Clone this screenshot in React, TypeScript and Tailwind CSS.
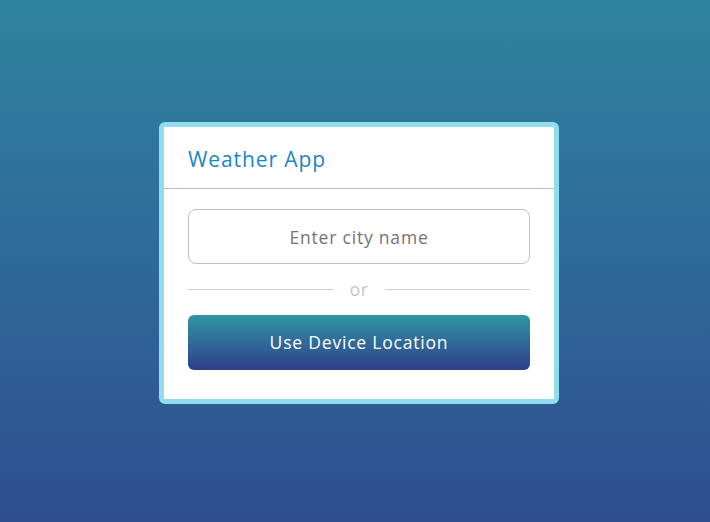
import React from "react";

export default function App() {
  return (
    <div
      className="w-full h-[522px] flex items-center justify-center pl-[8px] pt-[4px] bg-gradient-to-b from-[#2e84a0] to-[#2e4e8f]"
      style={{ fontFamily: "'Open Sans', 'Noto Sans', sans-serif" }}
    >
      <div className="w-[400px] bg-white border-[5px] border-[#92dcef] rounded-[6px] flex flex-col">
        <div className="h-[62px] border-b border-[#bdbdbd] flex items-center px-[24px]">
          <h1 className="text-[21px] text-[#1b87c1] leading-none tracking-[0.9px] pt-[3px]">Weather App</h1>
        </div>
        <div className="flex flex-col px-[24px] pt-[20px] pb-[29px]">
          <input
            className="h-[55px] w-full border border-[#c2c2c2] rounded-[8px] text-center text-[17.5px] tracking-[0.8px] text-[#555] placeholder:text-[#747474] outline-none"
            placeholder="Enter city name"
          />
          <div className="flex items-center h-[51px] gap-[16px]">
            <div className="flex-1 h-px bg-[#cfcfcf]"></div>
            <span className="text-[18px] text-[#c8c8c8] leading-none tracking-[0.5px] -mt-[1px]">or</span>
            <div className="flex-1 h-px bg-[#cfcfcf]"></div>
          </div>
          <button className="h-[55px] w-full rounded-[6px] bg-gradient-to-b from-[#2f96a3] to-[#2e3d8b] text-white text-[17.5px] tracking-[0.8px]">
            Use Device Location
          </button>
        </div>
      </div>
    </div>
  );
}
